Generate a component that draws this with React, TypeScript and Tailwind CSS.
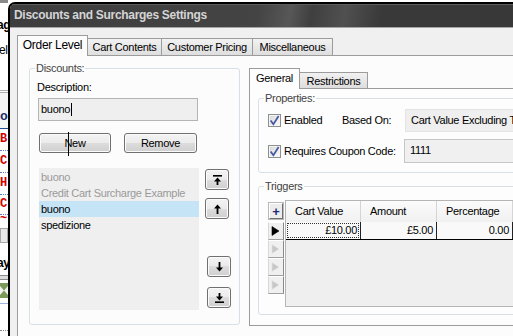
import React from "react"

const btn =
  "flex items-center justify-center rounded-[3px] border border-[#707070] bg-[linear-gradient(#f3f3f3,#ebebeb_50%,#dddddd_50%,#cfcfcf)] shadow-[inset_0_0_0_1px_#fbfbfb]"

function Backdrop() {
  return (
    <div className="flex w-[8px] shrink-0 flex-col overflow-hidden whitespace-nowrap bg-white font-bold">
      <div className="h-[3px] bg-[#8a8a8a]" />
      <div className="-ml-[3px] mt-[16px] text-[12px] leading-[12px]">ag</div>
      <div className="-ml-[1px] mt-[13px] text-[12px] font-normal leading-[12px]">el</div>
      <div className="mt-[34px] h-[3px] border-y border-[#b0b0b0]" />
      <div className="h-[35px] bg-[#f6f6f6] pt-[17px] font-['Liberation_Mono',monospace] text-[13px] leading-[13px] text-[#1c2f6b]">
        oc
      </div>
      <div className="h-px bg-[#2a4a9a]" />
      {["B", "C", "H"].map((c) => (
        <div
          key={c}
          className="flex h-[22px] items-center border-b border-dotted border-[#5b7fc0] font-['Liberation_Mono',monospace] text-[12px] text-[#d40000]"
        >
          {c}
        </div>
      ))}
      <div className="flex h-[20px] items-center border-b border-dotted border-[#5b7fc0] font-['Liberation_Mono',monospace] text-[12px] text-[#d40000]">
        C
      </div>
      <div className="h-[12px] overflow-hidden font-['Liberation_Mono',monospace] text-[12px] leading-[8px] text-[#d40000]">
        ~
      </div>
      <div className="mt-[1px] h-[15px] border border-[#a8a8a8] bg-[#e8e8e8]" />
      <div className="-ml-[3px] mt-[14px] text-[12px] leading-[12px]">ay</div>
      <div className="mt-[6px] h-[5px] border-y border-[#8c8c8c] bg-[#dcdcdc]" />
      <div className="mt-[3px] h-[15px] bg-[#7d9a5a]">
        <svg width="8" height="15" viewBox="0 0 8 15">
          <path d="M0 3 L4 7.5 L0 12 Z M8 3 L4 7.5 L8 12 Z" fill="#f2f2f2" />
        </svg>
      </div>
      <div className="mt-[5px] h-px bg-[#9bb7de]" />
      <div className="mt-[26px] h-px border-t border-dotted border-[#888]" />
    </div>
  )
}

function TitleBar() {
  return (
    <div className="flex h-[23px] shrink-0 items-center bg-[linear-gradient(100deg,#3d3d3d_0%,#444444_46%,#575757_52%,#3f3f3f_56%,#505050_62%,#393939_69%,#383838_100%)] pl-[4px] text-[12px] font-bold text-[#d4d4d4] shadow-[inset_0_1px_0_#5c5c5c]">
      Discounts and Surcharges Settings
    </div>
  )
}

function Checkbox() {
  return (
    <svg width="13" height="13" viewBox="0 0 13 13" className="shrink-0">
      <defs>
        <linearGradient id="cbfill" x1="0" y1="0" x2="1" y2="1">
          <stop offset="0" stopColor="#d9d9d9" />
          <stop offset="1" stopColor="#fafafa" />
        </linearGradient>
      </defs>
      <rect x="0.5" y="0.5" width="12" height="12" fill="#f5f5f5" stroke="#8e8f8f" />
      <rect x="2" y="2" width="9" height="9" fill="url(#cbfill)" />
      <path d="M2.6 6.4 L5.4 10.3 L10.6 2" fill="none" stroke="#4658a6" strokeWidth="1.7" />
    </svg>
  )
}

function Arrow({ dir, bar }: { dir: "up" | "down"; bar?: boolean }) {
  const up = dir === "up"
  return (
    <svg width="11" height="12" viewBox="0 0 11 12">
      {up ? (
        <>
          {bar && <rect x="1" y="1" width="9" height="1.6" fill="#000" />}
          <path d={bar ? "M5.5 3.5 L9 7.5 H2 Z" : "M5.5 1.5 L9 5.5 H2 Z"} fill="#000" />
          <rect x="4.6" y={bar ? 7 : 5} width="1.8" height={bar ? 4 : 6} fill="#000" />
        </>
      ) : (
        <>
          <rect x="4.6" y="1" width="1.8" height={bar ? 4 : 6} fill="#000" />
          <path d={bar ? "M5.5 8.5 L9 4.5 H2 Z" : "M5.5 10.5 L9 6.5 H2 Z"} fill="#000" />
          {bar && <rect x="1" y="9.4" width="9" height="1.6" fill="#000" />}
        </>
      )}
    </svg>
  )
}

function Discounts() {
  return (
    <fieldset className="w-[209px] shrink-0 rounded-[3px] border border-[#d5dfe5] px-[8px] pb-[14px] pt-[6px] shadow-[inset_1px_1px_0_#ffffff]">
      <legend className="-ml-[3px] px-[1px] text-[#444]">Discounts:</legend>
      <div className="-ml-px">Description:</div>
      <div className="mt-[4px] flex h-[23px] w-[160px] items-center border border-[#b4b4b4] bg-[#efefef] pl-[2px]">
        <span>buono</span>
        <span className="ml-px h-[13px] w-px bg-black" />
      </div>
      <div className="mt-[12px] flex">
        <div className={`relative ml-px h-[20px] w-[72px] ${btn}`}>
          New
          {/* mouse pointer over the button */}
          <div className="absolute left-[28px] top-[-2px] h-[24px] w-px bg-black" />
        </div>
        <div className={`ml-[13px] h-[20px] w-[73px] ${btn}`}>Remove</div>
      </div>
      <div className="mt-[15px] flex">
        <div className="ml-px h-[142px] w-[160px] bg-[#efefef] pt-px">
          <div className="h-[16px] pl-[2px] leading-[16px] text-[#9a9a9a]">buono</div>
          <div className="h-[16px] pl-[2px] leading-[16px] text-[#9a9a9a]">Credit Cart Surcharge Example</div>
          <div className="h-[16px] bg-[#c5e4f6] pl-[2px] leading-[16px]">buono</div>
          <div className="h-[16px] pl-[2px] leading-[16px]">spedizione</div>
        </div>
        <div className="ml-[6px] flex flex-col pt-px">
          <div className={`h-[21px] w-[24px] ${btn}`}>
            <Arrow dir="up" bar />
          </div>
          <div className={`mt-[8px] h-[21px] w-[24px] ${btn}`}>
            <Arrow dir="up" />
          </div>
          <div className={`ml-[2px] mt-[37px] h-[21px] w-[24px] ${btn}`}>
            <Arrow dir="down" />
          </div>
          <div className={`ml-[2px] mt-[10px] h-[21px] w-[24px] ${btn}`}>
            <Arrow dir="down" bar />
          </div>
        </div>
      </div>
    </fieldset>
  )
}

function Indicator({ active }: { active?: boolean }) {
  return (
    <div className="flex h-[18px] w-[16px] items-center border border-t-white border-l-[#d8d8d8] border-r-[#8a8a8a] border-b-[#a0a0a0] bg-[#f0f0f0] pl-[2px]">
      <svg width="9" height="10" viewBox="0 0 9 10">
        <path d="M1 0.5 L8 5 L1 9.5 Z" fill={active ? "#000" : "#c8c8c8"} stroke={active ? "#000" : "#e6e6e6"} strokeWidth="0.6" />
      </svg>
    </div>
  )
}

function Triggers() {
  const cols = [
    { h: "Cart Value", v: "£10.00", w: "w-[75px]" },
    { h: "Amount", v: "£5.00", w: "w-[76px]" },
    { h: "Percentage", v: "0.00", w: "w-[76px]" },
  ]
  return (
    <fieldset className="mt-[7px] w-[300px] rounded-[3px] border border-[#d5dfe5] pb-[7px] pl-[9px] pt-[7px] shadow-[inset_1px_1px_0_#ffffff]">
      <legend className="-ml-[4px] px-[1px] text-[#444]">Triggers</legend>
      <div className="flex">
        <div className="flex w-[16px] shrink-0 flex-col pt-[3px]">
          <div className="ml-px flex h-[16px] w-[14px] items-center justify-center border border-t-white border-l-white border-r-[#707070] border-b-[#707070] bg-[#ececec] shadow-[0_0_0_1px_#b8b8b8] text-[13px] font-bold leading-[13px] text-[#1e2b78]">
            +
          </div>
          <div className="mt-[3px]">
            <Indicator active />
            <Indicator />
            <Indicator />
            <Indicator />
          </div>
        </div>
        <div className="ml-px h-[107px] w-[280px] shrink-0 border-b border-l border-t border-[#b5b5b5] bg-[#efefef]">
          <div className="flex h-[21px] bg-[linear-gradient(#fbfbfb,#f1f1f1)]">
            {cols.map((c) => (
              <div key={c.h} className={`flex items-center border-r border-[#d5d5d5] pl-[9px] ${c.w}`}>
                {c.h}
              </div>
            ))}
            <div className="flex-1" />
          </div>
          <div className="flex h-[18px] border-b border-black bg-[#f9f9f9]">
            {cols.map((c, i) => (
              <div key={c.h} className={`flex border-r border-[#222] p-px ${c.w}`}>
                <div
                  className={`flex flex-1 items-center justify-end pr-px ${
                    i === 0 ? "border border-dotted border-[#333]" : "border border-transparent"
                  }`}
                >
                  {c.v}
                </div>
              </div>
            ))}
            <div className="flex-1" />
          </div>
        </div>
      </div>
    </fieldset>
  )
}

function RightTabs() {
  return (
    <div className="ml-[9px] mt-[6px] flex w-[280px] shrink-0 flex-col">
      <div className="flex h-[21px] items-end">
        <div className="relative z-10 flex h-[21px] w-[51px] items-center justify-center border-x border-t border-[#9c9c9c] bg-[#fdfdfd] pb-[2px]">
          General
        </div>
        <div className="flex h-[17px] w-[68px] items-center justify-center border-r border-t border-[#9c9c9c] bg-[linear-gradient(#f1f1f1,#dcdcdc)]">
          Restrictions
        </div>
      </div>
      <div className="-mt-px border-b border-l border-t border-[#9c9c9c] bg-[#fdfdfd] pb-[10px] pl-[8px] pt-[3px]">
        <fieldset className="w-[300px] rounded-[3px] border border-[#d5dfe5] pb-[9px] pl-[9px] pt-[4px] shadow-[inset_1px_1px_0_#ffffff]">
          <legend className="-ml-[4px] px-[1px] text-[#444]">Properties:</legend>
          <div className="flex h-[23px] items-center">
            <div className="flex w-[74px] shrink-0 items-center gap-[3px]">
              <Checkbox />
              <span>Enabled</span>
            </div>
            <div className="w-[63px] shrink-0">Based On:</div>
            <div className="flex h-[23px] w-[160px] shrink-0 items-center border-y border-l border-[#e4e4e4] bg-[#efefef] pl-[5px]">
              Cart Value Excluding Tax
            </div>
          </div>
          <div className="mt-[7px] flex h-[24px] items-center">
            <div className="flex w-[136px] shrink-0 items-center gap-[3px]">
              <Checkbox />
              <span>Requires Coupon Code:</span>
            </div>
            <div className="flex h-[24px] w-[160px] shrink-0 items-start border-y border-l border-[#c6c6c6] bg-[#f0f0f0] pl-[5px] pt-[4px]">
              1111
            </div>
          </div>
        </fieldset>
        <Triggers />
      </div>
    </div>
  )
}

export default function App() {
  return (
    <div className="flex h-[336px] w-[513px] overflow-hidden bg-white font-['Liberation_Sans',Arial,sans-serif] text-[11px] leading-[13px] tracking-[-0.3px] text-black">
      <Backdrop />
      <div className="mt-[2px] flex w-[540px] shrink-0 flex-col overflow-hidden rounded-tl-[7px] border-l-2 border-t-2 border-black">
        <TitleBar />
        <div className="flex flex-1 flex-col border-t border-[#a5a5a5] bg-[#f0f0f0] pl-[7px] pt-[7px]">
          <div className="flex h-[21px] items-end">
            <div className="relative z-10 flex h-[21px] w-[71px] items-center justify-center border-x border-t border-[#9c9c9c] bg-[#fcfcfc] pb-px text-[12px]">
              Order Level
            </div>
            <div className="flex h-[18px] w-[74px] items-center justify-center border-r border-t border-[#9c9c9c] bg-[linear-gradient(#f2f2f2,#dddddd)]">
              Cart Contents
            </div>
            <div className="flex h-[18px] w-[91px] items-center justify-center border-r border-t border-[#9c9c9c] bg-[linear-gradient(#f2f2f2,#dddddd)]">
              Customer Pricing
            </div>
            <div className="flex h-[18px] w-[80px] items-center justify-center border-r border-t border-[#9c9c9c] bg-[linear-gradient(#f2f2f2,#dddddd)]">
              Miscellaneous
            </div>
          </div>
          <div className="-mt-px flex flex-1 items-start border-l border-t border-[#9c9c9c] bg-[#fcfcfc] pl-[11px] pt-[6px]">
            <Discounts />
            <RightTabs />
          </div>
        </div>
      </div>
    </div>
  )
}
